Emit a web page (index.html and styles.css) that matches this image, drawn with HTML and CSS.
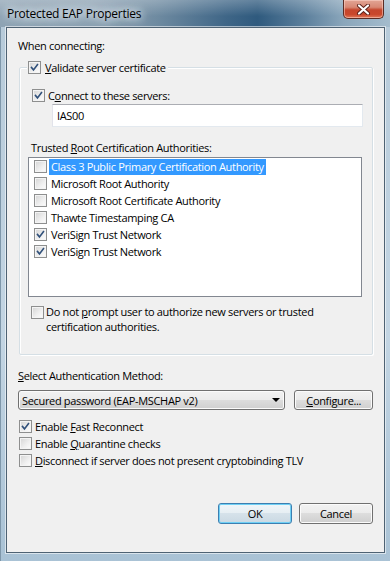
FILE: index.html
```html
<!DOCTYPE html>
<html>
<head>
<meta charset="utf-8">
<link rel="stylesheet" href="styles.css">
</head>
<body>
<div class="window">
  <div class="titlebar">
    <span class="title">Protected EAP Properties</span>
    <span class="close"><svg width="15" height="11" viewBox="0 0 15 11"><path d="M3 1.5 L12 9.5 M12 1.5 L3 9.5" stroke="#5a2018" stroke-width="4" stroke-linecap="round"/><path d="M3 1.5 L12 9.5 M12 1.5 L3 9.5" stroke="#fff" stroke-width="2.2" stroke-linecap="round"/></svg></span>
  </div>
  <div class="client">
    <div class="label when">When connecting:</div>
    <fieldset class="group">
      <legend><span class="cb on"><svg viewBox="0 0 13 13"><polyline points="3,6.5 5.3,9.3 10,3.2"/></svg></span><span><u>V</u>alidate server certificate</span></legend>
      <div class="row connect"><span class="cb on"><svg viewBox="0 0 13 13"><polyline points="3,6.5 5.3,9.3 10,3.2"/></svg></span><span>C<u>o</u>nnect to these servers:</span></div>
      <div class="textbox">IAS00</div>
      <div class="label trusted">Trusted <u>R</u>oot Certification Authorities:</div>
      <div class="listbox">
        <div class="item"><span class="cb"></span><span class="txt sel">Class 3 Public Primary Certification Authority</span></div>
        <div class="item"><span class="cb"></span><span class="txt">Microsoft Root Authority</span></div>
        <div class="item"><span class="cb"></span><span class="txt">Microsoft Root Certificate Authority</span></div>
        <div class="item"><span class="cb"></span><span class="txt">Thawte Timestamping CA</span></div>
        <div class="item"><span class="cb on"><svg viewBox="0 0 13 13"><polyline points="3,6.5 5.3,9.3 10,3.2"/></svg></span><span class="txt">VeriSign Trust Network</span></div>
        <div class="item"><span class="cb on"><svg viewBox="0 0 13 13"><polyline points="3,6.5 5.3,9.3 10,3.2"/></svg></span><span class="txt">VeriSign Trust Network</span></div>
      </div>
      <div class="row prompt"><span class="cb"></span><div class="ptext"><div>Do not <u>p</u>rompt user to authorize new servers or trusted</div><div>certification authorities.</div></div></div>
    </fieldset>
    <div class="label select"><u>S</u>elect Authentication Method:</div>
    <div class="method">
      <div class="combo"><span>Secured password (EAP-MSCHAP v2)</span><span class="arrow"></span></div>
      <div class="btn configure"><span><u>C</u>onfigure...</span></div>
    </div>
    <div class="checks">
      <div class="row chk"><span class="cb on"><svg viewBox="0 0 13 13"><polyline points="3,6.5 5.3,9.3 10,3.2"/></svg></span><span>Enable <u>F</u>ast Reconnect</span></div>
      <div class="row chk"><span class="cb"></span><span>Enable <u>Q</u>uarantine checks</span></div>
      <div class="row chk"><span class="cb"></span><span><u>D</u>isconnect if server does not present cryptobinding TLV</span></div>
    </div>
    <div class="buttons">
      <div class="btn default">OK</div>
      <div class="btn">Cancel</div>
    </div>
  </div>
</div>
</body>
</html>
```
FILE: styles.css
```css
* { box-sizing: border-box; }
html, body { margin: 0; padding: 0; }
body {
  width: 390px;
  height: 561px;
  overflow: hidden;
  font-family: "Open Sans", "Noto Sans", sans-serif;
  font-size: 11px;
  letter-spacing: -0.33px;
  color: #000;
  background: #9fb7ca;
}
u { text-decoration: underline; text-underline-offset: 1px; }

.window {
  width: 390px;
  height: 561px;
  display: flex;
  flex-direction: column;
  background: linear-gradient(to bottom, #b6cad9 0%, #c3d5e3 60%, #a9c2d5 100%);
  border-left: 1px solid #7e97aa;
}

.titlebar {
  height: 27px;
  flex: none;
  display: flex;
  justify-content: space-between;
  align-items: flex-start;
  margin-left: -1px;
  background:
    linear-gradient(to bottom, rgba(255,255,255,0.25), rgba(255,255,255,0) 60%),
    linear-gradient(to right, #8ea3b4 0%, #8aa0b2 25%, #6f8ba1 40%, #3f6687 58%, #2f5a7e 66%, #5b7f9c 78%, #8aa6bb 88%, #a4bccd 100%);
}
.title {
  margin: 5px 0 0 7px;
  line-height: 17px;
  font-size: 12px;
  letter-spacing: -0.25px;
  color: #000;
  text-shadow: 0 0 6px #e6edf2, 0 0 10px #e6edf2, 0 0 14px #dfe7ee;
}
.close {
  width: 41px;
  height: 19px;
  margin-right: 6px;
  border: 1px solid #5b2c24;
  border-top: none;
  border-radius: 0 0 5px 5px;
  background: linear-gradient(to bottom, #e2a595 0%, #d88874 40%, #c5462d 55%, #c9472b 80%, #e0795a 100%);
  box-shadow: inset 0 0 0 1px rgba(255,220,210,0.5);
  display: flex;
  align-items: center;
  justify-content: center;
}

.client {
  flex: 1;
  margin: 0 5px 8px 5px;
  border: 1px solid #4e6273;
  background: #f0f0f0;
  padding: 10px 11px 0 11px;
  display: flex;
  flex-direction: column;
  box-shadow: 0 0 0 1px rgba(255,255,255,0.55);
}

.label { line-height: 15px; white-space: nowrap; }

.cb {
  flex: none;
  width: 13px;
  height: 13px;
  border: 1px solid #8e8f8f;
  background: linear-gradient(135deg, #d4d4d4 0%, #f0f0f0 60%, #fdfdfd 100%);
  box-shadow: inset 0 0 0 1px #f4f4f4;
  display: inline-flex;
}
.cb svg { width: 11px; height: 11px; }
.cb polyline { fill: none; stroke: #30507a; stroke-width: 1.9; stroke-linecap: square; }

.row { display: flex; align-items: center; line-height: 15px; white-space: nowrap; }
.row .cb { margin-right: 3px; }

.group {
  margin: 7px 0 0 1px;
  padding: 0 0 20px 0;
  border: 1px solid #d5dfe5;
  border-radius: 2px;
  box-shadow: inset 1px 1px 0 #fff, 1px 1px 0 #fff;
  min-width: 0;
}
.group legend {
  margin-left: 7px;
  padding: 0 2px 0 1px;
  background: #f0f0f0;
  display: flex;
  align-items: center;
  line-height: 15px;
}
.group legend .cb { margin-right: 4px; }

.connect { margin: 13px 0 0 12px; }
.textbox {
  margin: 1px 0 0 32px;
  width: 311px;
  height: 23px;
  background: #fff;
  border: 1px solid #e3e9ef;
  border-top-color: #abadb3;
  border-left-color: #e2e3ea;
  padding-left: 4px;
  line-height: 21px;
}
.trusted { margin: 13px 0 0 11px; }
.listbox {
  margin: 2px 0 0 8px;
  width: 334px;
  height: 140px;
  background: #fff;
  border: 1px solid #828790;
  padding: 0 0 0 5px;
}
.item { display: flex; align-items: center; height: 17px; white-space: nowrap; }
.item .txt { margin-left: 2px; padding: 0 2px; line-height: 16px; }
.item .sel { background: #3399ff; color: #fff; }

.prompt { margin: 7px 0 0 11px; align-items: flex-start; }
.prompt .cb { margin-top: 2px; margin-right: 2px; }
.ptext { line-height: 15px; display: flex; flex-direction: column; }

.select { margin-top: 13px; }
.method { display: flex; margin-top: 7px; gap: 9px; }
.combo {
  width: 269px;
  height: 20px;
  border: 1px solid #707070;
  border-radius: 3px;
  background: linear-gradient(to bottom, #f2f2f2 0%, #ebebeb 50%, #dddddd 50%, #cfcfcf 100%);
  box-shadow: inset 0 0 0 1px #fbfbfb;
  display: flex;
  align-items: center;
  justify-content: space-between;
  padding: 0 4px 0 3px;
  white-space: nowrap;
}
.arrow {
  width: 0; height: 0;
  border-left: 4px solid transparent;
  border-right: 4px solid transparent;
  border-top: 4px solid #000;
}
.btn {
  height: 21px;
  width: 74px;
  border: 1px solid #707070;
  border-radius: 3px;
  background: linear-gradient(to bottom, #f2f2f2 0%, #ebebeb 50%, #dddddd 50%, #cfcfcf 100%);
  box-shadow: inset 0 0 0 1px #fbfbfb;
  display: flex;
  align-items: center;
  justify-content: center;
}
.configure { width: 79px; height: 20px; }
.checks { margin-top: 8px; }
.chk { height: 17px; margin-left: 1px; }
.chk .cb { margin-right: 3px; }

.buttons { margin-top: 34px; display: flex; justify-content: flex-end; gap: 7px; }
.btn.default {
  border-color: #3c7fb1;
  box-shadow: inset 0 0 0 1px #6fd0f5;
  background: linear-gradient(to bottom, #f0f6f9 0%, #e6eef3 50%, #d6e2ea 50%, #cad9e3 100%);
}
```
